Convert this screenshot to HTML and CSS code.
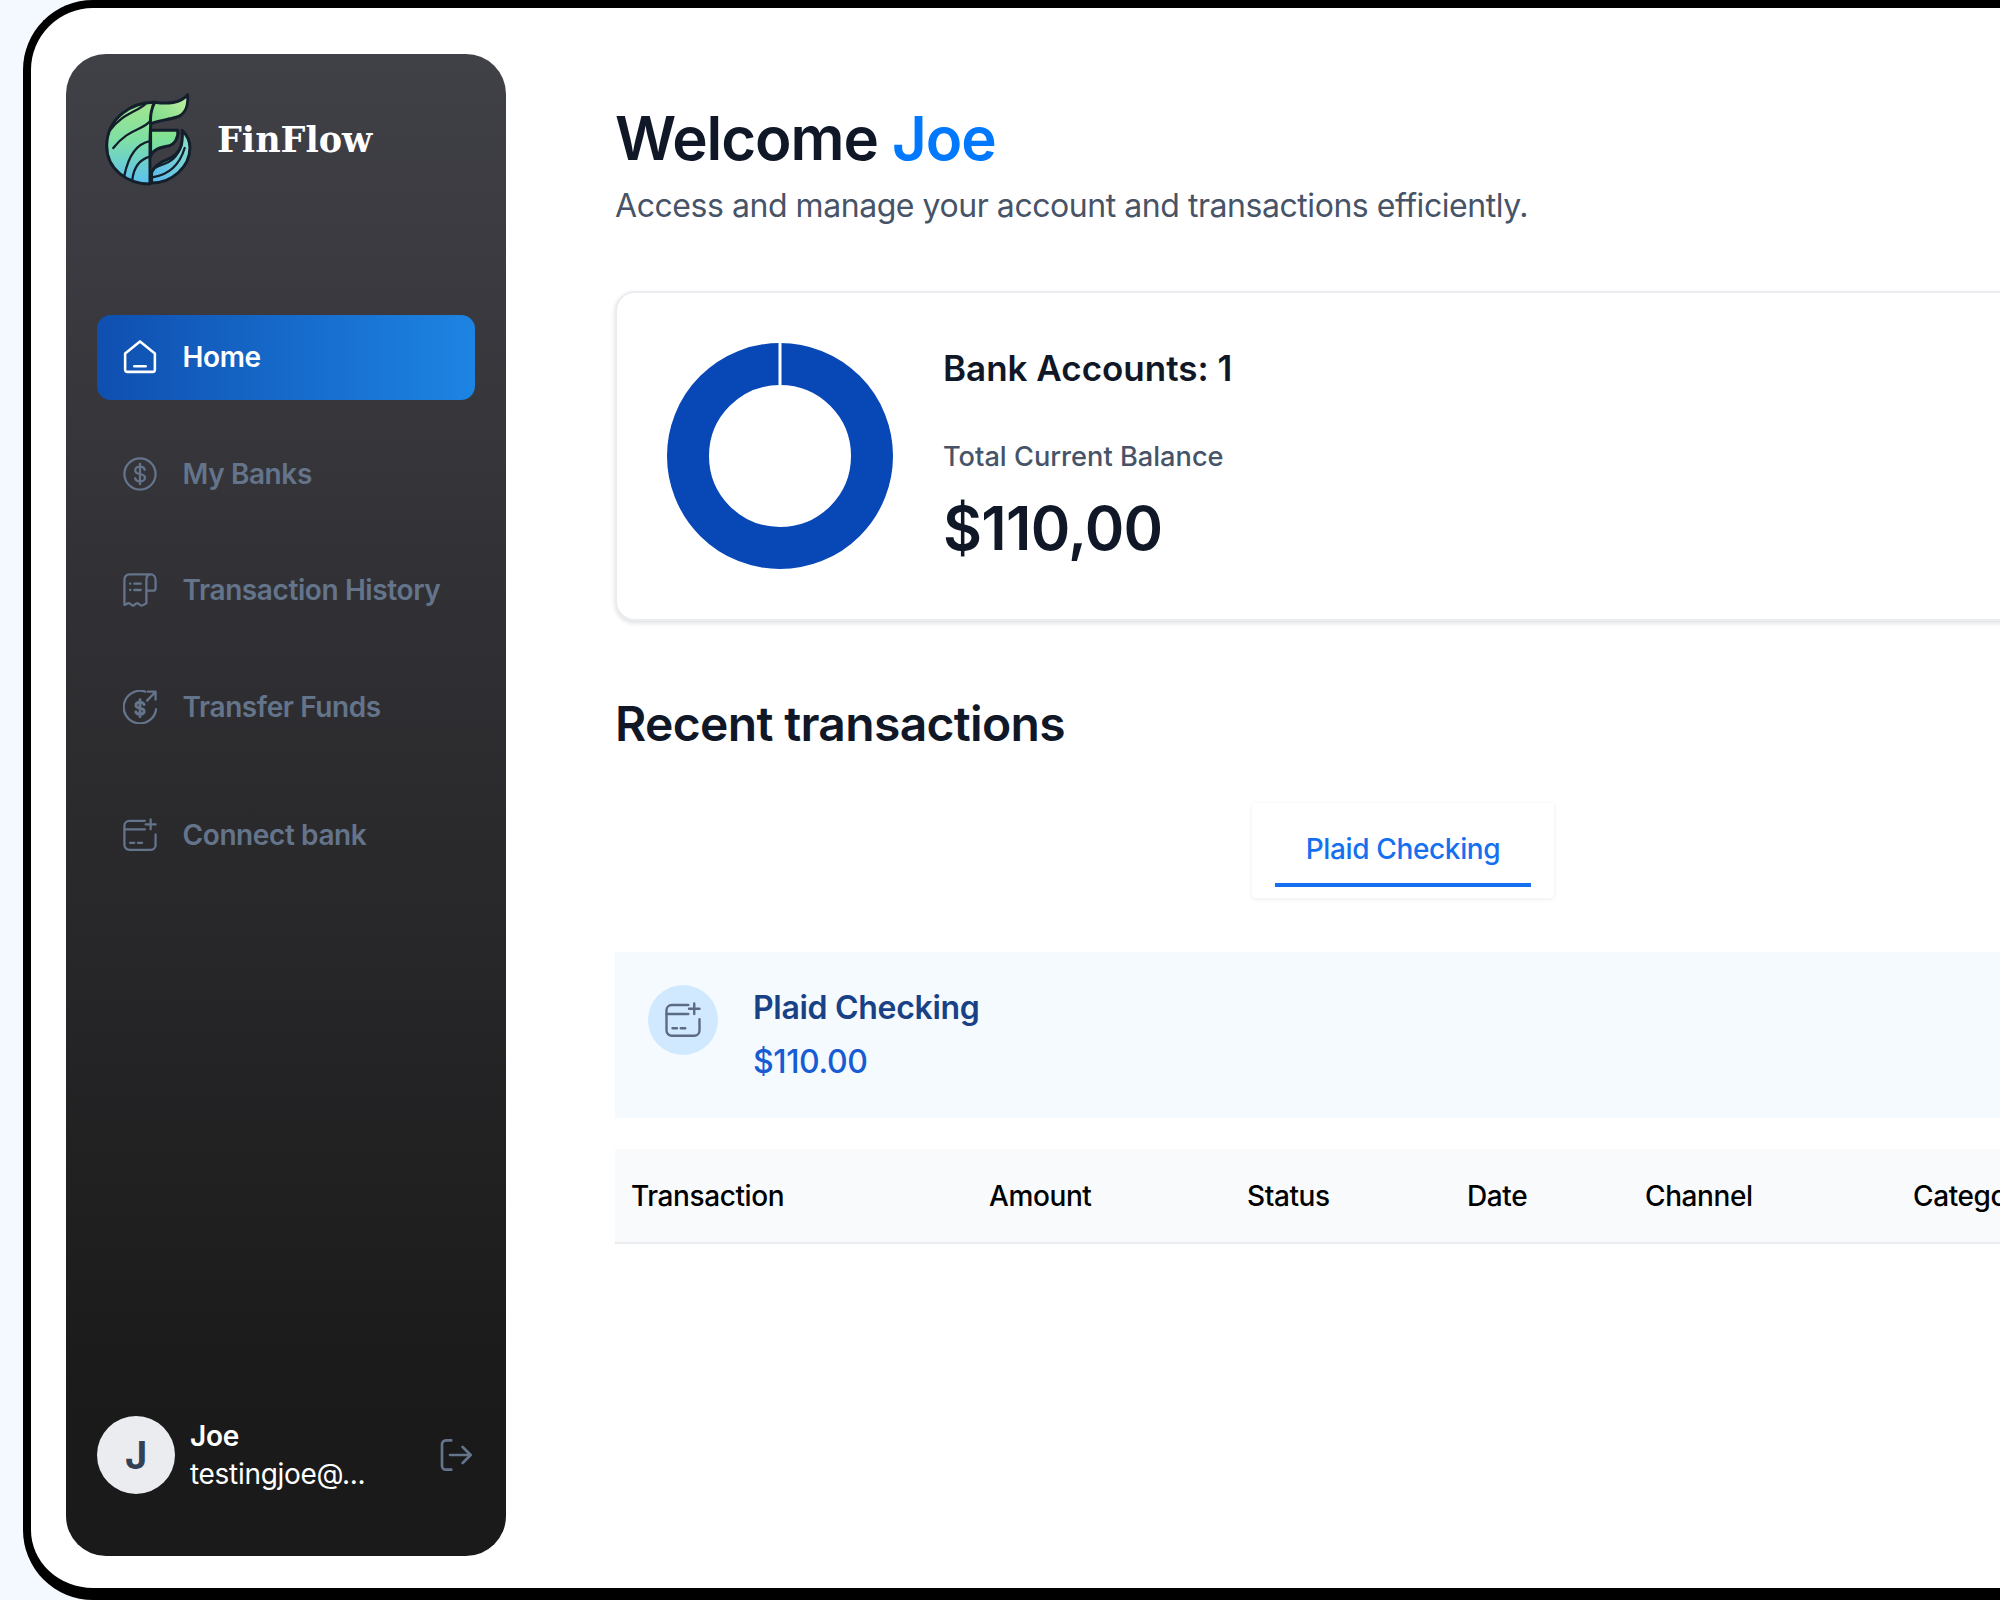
FILE: index.html
```html
<!DOCTYPE html>
<html lang="en">
<head>
  <meta charset="UTF-8">
  <title>FinFlow</title>
  <link rel="stylesheet" href="styles.css">
</head>
<body>
  <div class="frame">
    <aside class="sidebar">
      <div class="brand">
        <svg class="brand-logo" viewBox="312 278 264 290">
          <defs>
            <linearGradient id="sweep" x1="0" y1="0" x2="0" y2="1">
              <stop offset="0" stop-color="#a4e58c"/>
              <stop offset="0.45" stop-color="#7fe0a4"/>
              <stop offset="1" stop-color="#5cc0f2"/>
            </linearGradient>
            <linearGradient id="flag" x1="1" y1="0" x2="0" y2="1">
              <stop offset="0" stop-color="#c4f0a0"/>
              <stop offset="1" stop-color="#74d98a"/>
            </linearGradient>
            <linearGradient id="bar" x1="0" y1="0" x2="0" y2="1">
              <stop offset="0" stop-color="#86e38c"/>
              <stop offset="1" stop-color="#6fdcb0"/>
            </linearGradient>
            <linearGradient id="swirl" x1="1" y1="0" x2="0" y2="1">
              <stop offset="0" stop-color="#8fe3c4"/>
              <stop offset="1" stop-color="#56b8f0"/>
            </linearGradient>
          </defs>
          <g stroke="#131f2b" stroke-width="9" stroke-linejoin="round" stroke-linecap="round">
            <path fill="url(#sweep)" d="M462 306C400 306 318 350 318 440C318 510 380 556 450 556L450 450C450 400 452 345 462 306Z"/>
            <path fill="url(#flag)" d="M465 306C500 312 545 310 565 283C568 320 555 345 530 352C505 360 475 362 452 372C450 350 455 325 465 306Z"/>
            <path fill="url(#bar)" d="M452 392L535 392C538 415 525 435 505 440C480 445 460 450 452 470Z"/>
            <path fill="url(#swirl)" d="M455 553C515 553 572 505 572 445C572 425 562 405 548 392C552 430 545 465 505 480C480 490 462 505 455 520Z"/>
            <g fill="none" stroke-width="7">
              <path d="M436 312C410 335 360 345 328 392"/>
              <path d="M452 362C430 392 385 385 338 446"/>
              <path d="M450 425C415 432 385 465 372 530"/>
              <path d="M450 472C420 480 400 505 396 544"/>
              <path d="M460 535C490 530 535 515 556 446"/>
              <path d="M468 505C500 490 530 490 548 432"/>
            </g>
          </g>
        </svg>
        <span class="brand-name">FinFlow</span>
      </div>

      <nav class="nav">
        <a class="nav-item active">
          <svg class="nav-icon" viewBox="0 0 24 24">
            <path d="M1.5 9.5L12 1L22.5 9.5V21A1.5 1.5 0 0 1 21 22.5H3A1.5 1.5 0 0 1 1.5 21Z"/>
            <path d="M8 18.5H16"/>
          </svg>
          Home
        </a>
        <a class="nav-item">
          <svg class="nav-icon" viewBox="0 0 24 24">
            <circle cx="12" cy="12" r="11"/>
            <path d="M15.3 9C15 7.6 13.7 6.8 12 6.8C10 6.8 8.6 7.9 8.6 9.4C8.6 11 10 11.7 12 12C14 12.3 15.5 13 15.5 14.6C15.5 16.1 14 17.2 12 17.2C10.2 17.2 8.9 16.4 8.5 15M12 4.8V19.2"/>
          </svg>
          My Banks
        </a>
        <a class="nav-item">
          <svg class="nav-icon" viewBox="0 0 24 24">
            <path d="M19 1H4.5A3.5 3.5 0 0 0 1 4.5V22.5C2.2 22.5 2.7 21.3 4 21.3C5.3 21.3 5.8 23 7 23C8.3 23 8.7 21.3 10 21.3C11.3 21.3 11.8 23 13 23C14.3 23 15 22 16.5 21.3V5C16.5 2.8 17.5 1 19.5 1C21.5 1 23 2.8 23 5V11A1.5 1.5 0 0 1 21.5 12.5H16.5"/>
            <path d="M5 7.5H5.2M5 12H5.2M8 7.5H12.5M8 12H12.5"/>
          </svg>
          Transaction History
        </a>
        <a class="nav-item">
          <svg class="nav-icon" viewBox="0 0 24 24">
            <path d="M15.8 1.2A11.5 11.5 0 1 0 23.4 13.5"/>
            <path d="M17 7.5L23 1.2M17.5 1.2H23V6.8"/>
            <path stroke-width="2" d="M14.9 10.3C14.5 9.1 13.4 8.5 12 8.5C10.3 8.5 9.1 9.4 9.1 10.7C9.1 12 10.3 12.5 12 12.8C13.7 13.1 15 13.7 15 15C15 16.3 13.7 17.2 12 17.2C10.5 17.2 9.4 16.6 9 15.4M12 6.9V18.8"/>
          </svg>
          Transfer Funds
        </a>
        <a class="nav-item connect">
          <svg class="nav-icon" viewBox="0 0 24 24">
            <path d="M15.5 2H4.5A3.5 3.5 0 0 0 1 5.5V19A3.5 3.5 0 0 0 4.5 22.5H19.5A3.5 3.5 0 0 0 23 19V11.5"/>
            <path d="M1 8H15.5M19.5 1V8M16 4.5H23M5 17.5H8M10.5 17.5H13.5"/>
          </svg>
          Connect bank
        </a>
      </nav>

      <div class="user">
        <div class="avatar">J</div>
        <div class="user-info">
          <div class="user-name">Joe</div>
          <div class="user-email">testingjoe@...</div>
        </div>
        <svg class="logout" viewBox="0 0 24 24">
          <path d="M8.5 1H4.5A3 3 0 0 0 1.5 4V20A3 3 0 0 0 4.5 23H8.5"/>
          <path d="M7.5 12H23M17 6L23 12L17 18"/>
        </svg>
      </div>
    </aside>

    <main class="main">
      <h1 class="title">Welcome <span class="title-name">Joe</span></h1>
      <p class="subtitle">Access and manage your account and transactions efficiently.</p>

      <section class="balance-card">
        <svg class="donut" viewBox="0 0 226 226">
          <circle cx="113" cy="113" r="92" fill="none" stroke="#0747b6" stroke-width="42"/>
          <rect x="111.5" y="0" width="3" height="42" fill="#fff"/>
        </svg>
        <div class="balance-info">
          <h2 class="balance-accounts">Bank Accounts: 1</h2>
          <div class="balance-label">Total Current Balance</div>
          <div class="balance-amount">$110,00</div>
        </div>
      </section>

      <h2 class="section-title">Recent transactions</h2>

      <div class="tabs">
        <div class="tab"><span class="tab-label">Plaid Checking</span></div>
      </div>

      <div class="bank-band">
        <div class="bank-icon">
          <svg viewBox="0 0 24 24">
            <path d="M15.5 2H4.5A3.5 3.5 0 0 0 1 5.5V19A3.5 3.5 0 0 0 4.5 22.5H19.5A3.5 3.5 0 0 0 23 19V11.5"/>
            <path d="M1 8H15.5M19.5 1V8M16 4.5H23M5 17.5H8M10.5 17.5H13.5"/>
          </svg>
        </div>
        <div class="bank-text">
          <div class="bank-name">Plaid Checking</div>
          <div class="bank-amount">$110.00</div>
        </div>
      </div>

      <table class="transactions">
        <colgroup>
          <col class="col-transaction">
          <col class="col-amount">
          <col class="col-status">
          <col class="col-date">
          <col class="col-channel">
          <col class="col-category">
        </colgroup>
        <thead>
          <tr>
            <th>Transaction</th>
            <th>Amount</th>
            <th>Status</th>
            <th>Date</th>
            <th>Channel</th>
            <th>Category</th>
          </tr>
        </thead>
      </table>
    </main>
  </div>
</body>
</html>
```

FILE: styles.css
```css
* {
  box-sizing: border-box;
}

body {
  margin: 0;
  height: 1600px;
  overflow: hidden;
  background-color: #f3f9ff;
  font-family: Inter, "Liberation Sans", sans-serif;
}

.frame {
  display: flex;
  width: 1977px;
  height: 1600px;
  margin-left: 23px;
  padding: 46px 0 32px 35px;
  overflow: hidden;
  background-color: #fff;
  border: solid #000;
  border-width: 8px 0 12px 8px;
  border-radius: 70px 0 0 70px;
}

/* sidebar */
.sidebar {
  display: flex;
  flex-direction: column;
  flex-shrink: 0;
  width: 440px;
  padding: 39px 31px 62px;
  background: linear-gradient(180deg, #404047 0%, #1a1a1a 90%);
  border-radius: 40px;
}

.brand {
  display: flex;
  align-items: center;
  gap: 25px;
  margin: 0 0 127px 7px;
}

.brand-logo {
  width: 88px;
  height: 95px;
}

.brand-name {
  padding-bottom: 2px;
  color: #fff;
  font-family: "DejaVu Serif", serif;
  font-size: 35px;
  font-weight: 700;
}

.nav {
  display: flex;
  flex-direction: column;
  gap: 31.5px;
}

.nav-item {
  display: flex;
  align-items: center;
  gap: 25.5px;
  height: 85px;
  padding: 0 0 1px 26px;
  color: #64748b;
  font-size: 28px;
  font-weight: 600;
  letter-spacing: -0.4px;
  border-radius: 14px;
}

.nav-item.active {
  color: #fff;
  background: linear-gradient(90deg, #0f4fb0 0%, #1d84e3 100%);
}

.nav-item.active .nav-icon {
  stroke-width: 1.8;
}

.nav-item.connect {
  margin-top: 11.5px;
}

.nav-icon {
  width: 34px;
  height: 34px;
  fill: none;
  stroke: currentColor;
  stroke-width: 1.6;
  stroke-linecap: round;
  stroke-linejoin: round;
}

.user {
  display: flex;
  align-items: center;
  margin-top: auto;
}

.avatar {
  display: flex;
  align-items: center;
  justify-content: center;
  width: 78px;
  height: 78px;
  margin-right: 15px;
  color: #344054;
  background-color: #eaecf0;
  font-size: 38px;
  font-weight: 700;
  border-radius: 50%;
}

.user-info {
  flex-grow: 1;
  color: #fff;
  font-size: 28px;
  letter-spacing: -0.3px;
  line-height: 38px;
}

.user-name {
  font-weight: 600;
}

.logout {
  width: 32px;
  height: 32px;
  margin-right: 3px;
  fill: none;
  stroke: #64748b;
  stroke-width: 2;
  stroke-linecap: round;
  stroke-linejoin: round;
}

/* main area */
.main {
  flex-shrink: 0;
  width: 1576px;
  margin: 48px 0 0 109px;
}

.title {
  margin: 0;
  color: #101828;
  font-size: 60px;
  font-weight: 600;
  letter-spacing: -1.05px;
  line-height: 72px;
}

.title-name {
  color: #0179fe;
}

.subtitle {
  margin: 12px 0 0;
  color: #475467;
  font-size: 32px;
  letter-spacing: -0.45px;
  line-height: 40px;
}

.balance-card {
  display: flex;
  align-items: center;
  gap: 50px;
  height: 330px;
  margin-top: 65px;
  padding-left: 50px;
  background-color: #fff;
  border: 2px solid #eaecf0;
  border-radius: 20px;
  box-shadow: 0 2px 5px rgba(16, 24, 40, 0.14);
}

.donut {
  width: 226px;
  height: 226px;
}

.balance-info {
  margin-bottom: 2.5px;
}

.balance-accounts {
  margin: 0;
  color: #101828;
  font-size: 35px;
  font-weight: 600;
  line-height: 44px;
}

.balance-label {
  margin-top: 48.5px;
  color: #475467;
  font-size: 27.2px;
  font-weight: 500;
  line-height: 36px;
}

.balance-amount {
  margin-top: 17px;
  color: #101828;
  font-size: 60px;
  font-weight: 600;
  letter-spacing: -0.7px;
  line-height: 72px;
}

.section-title {
  margin: 73px 0 0;
  color: #101828;
  font-size: 48px;
  font-weight: 600;
  letter-spacing: -0.67px;
  line-height: 60px;
}

.tabs {
  display: flex;
  justify-content: center;
  margin-top: 49px;
}

.tab {
  width: 302px;
  height: 95px;
  padding: 0 23px;
  background-color: #fff;
  box-shadow: 0 1px 4px rgba(16, 24, 40, 0.08);
  border-radius: 4px;
}

.tab-label {
  display: block;
  height: 84px;
  color: #1570ef;
  font-size: 28px;
  font-weight: 500;
  letter-spacing: -0.35px;
  line-height: 92px;
  text-align: center;
  border-bottom: 4px solid #1570ef;
}

.bank-band {
  display: flex;
  gap: 35px;
  height: 166px;
  margin-top: 54px;
  padding: 33px;
  background-color: #f5faff;
}

.bank-icon {
  display: flex;
  align-items: center;
  justify-content: center;
  width: 70px;
  height: 70px;
  background-color: #d1e9ff;
  border-radius: 50%;
}

.bank-icon svg {
  width: 36px;
  height: 36px;
  fill: none;
  stroke: #5d6b82;
  stroke-width: 1.6;
  stroke-linecap: round;
  stroke-linejoin: round;
}

.bank-text {
  padding-top: 1px;
}

.bank-name {
  color: #194185;
  font-size: 32px;
  font-weight: 600;
  letter-spacing: -0.3px;
  line-height: 44px;
}

.bank-amount {
  margin-top: 10px;
  color: #175cd3;
  font-size: 32px;
  font-weight: 500;
  letter-spacing: -0.4px;
  line-height: 44px;
}

.transactions {
  width: 100%;
  margin-top: 31px;
  table-layout: fixed;
  border-collapse: collapse;
}

.transactions th {
  height: 94px;
  padding: 0 16px;
  color: #000;
  background-color: #f9fafb;
  font-size: 28px;
  font-weight: 500;
  letter-spacing: -0.4px;
  text-align: left;
  border-bottom: 2px solid #eaecf0;
}

.col-transaction {
  width: 358px;
}

.col-amount {
  width: 258px;
}

.col-status {
  width: 220px;
}

.col-date {
  width: 178px;
}

.col-channel {
  width: 268px;
}
```
